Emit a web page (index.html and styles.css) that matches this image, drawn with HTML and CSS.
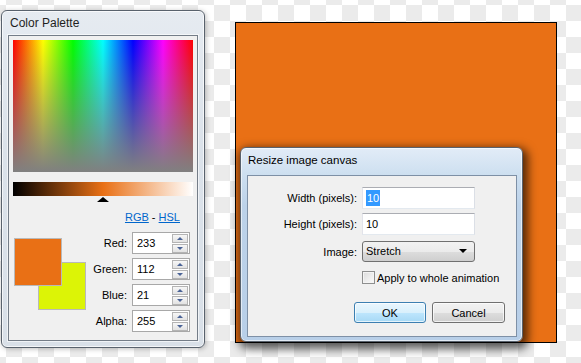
FILE: index.html
```html
<!DOCTYPE html>
<html lang="en">
<head>
    <meta charset="UTF-8">
    <title>Color Palette</title>
    <link rel="stylesheet" href="styles.css">
</head>
<body>
    <div class="win palette">
        <div class="win-title">Color Palette</div>
        <div class="win-body">
            <div class="hue"></div>
            <div class="shade"></div>
            <div class="marker"></div>
            <div class="modes"><a href="#">RGB</a> - <a href="#">HSL</a></div>
            <div class="mix">
                <div class="swatches">
                    <div class="swatch back"></div>
                    <div class="swatch front"></div>
                </div>
                <div class="channels">
                    <div class="channel">
                        <span class="channel-label">Red:</span>
                        <div class="spin"><div class="spin-value">233</div><div class="arrows"><b class="up"></b><b class="down"></b></div></div>
                    </div>
                    <div class="channel">
                        <span class="channel-label">Green:</span>
                        <div class="spin"><div class="spin-value">112</div><div class="arrows"><b class="up"></b><b class="down"></b></div></div>
                    </div>
                    <div class="channel">
                        <span class="channel-label">Blue:</span>
                        <div class="spin"><div class="spin-value">21</div><div class="arrows"><b class="up"></b><b class="down"></b></div></div>
                    </div>
                    <div class="channel">
                        <span class="channel-label">Alpha:</span>
                        <div class="spin"><div class="spin-value">255</div><div class="arrows"><b class="up"></b><b class="down"></b></div></div>
                    </div>
                </div>
            </div>
        </div>
    </div>

    <div class="canvas"></div>

    <div class="win dialog">
        <div class="win-title">Resize image canvas</div>
        <div class="win-body">
            <div class="row">
                <span class="row-label">Width (pixels):</span>
                <div class="textbox"><span class="selected">10</span></div>
            </div>
            <div class="row">
                <span class="row-label">Height (pixels):</span>
                <div class="textbox">10</div>
            </div>
            <div class="row row-select">
                <span class="row-label">Image:</span>
                <div class="select">Stretch<span class="caret"></span></div>
            </div>
            <div class="row row-check">
                <span class="row-label"></span>
                <span class="checkbox"></span>
                <span>Apply to whole animation</span>
            </div>
            <div class="buttons">
                <button class="btn default">OK</button>
                <button class="btn">Cancel</button>
            </div>
        </div>
    </div>
</body>
</html>
```

FILE: styles.css
```css
body {
    margin: 0;
    width: 581px;
    height: 363px;
    position: relative;
    overflow: hidden;
    font-family: "Liberation Sans", Arial, sans-serif;
    font-size: 11px;
    color: #000;
    background-color: #fff;
    background-image: conic-gradient(#ebebeb 0 25%, #fff 0 50%, #ebebeb 0 75%, #fff 0);
    background-size: 32px 32px;
    background-position: 6px 5px;
}
.win {
    position: absolute;
    box-sizing: border-box;
    border: 1px solid #59626d;
    border-radius: 6px;
    display: flex;
    flex-direction: column;
}
.win-title {
    white-space: nowrap;
}
.win-body {
    flex: 1;
    background-color: #f0f0f0;
}

/* color palette window */
.palette {
    left: 1px;
    top: 10px;
    width: 204px;
    height: 338px;
    background: linear-gradient(#e6ebf1, #dbe2ea 40%, #d9e0e8);
    box-shadow: inset 0 0 0 1px rgba(255, 255, 255, 0.7), 1px 1px 5px rgba(0, 0, 0, 0.25);
    padding: 0 6px 6px 6px;
}
.palette .win-title {
    height: 24px;
    line-height: 24px;
    padding-left: 2px;
    font-size: 12px;
    color: #1e1e1e;
}
.palette .win-body {
    border: 1px solid #747d88;
    box-shadow: 0 0 0 1px rgba(255, 255, 255, 0.6);
    padding: 4px 4px 0 4px;
}
.hue {
    height: 132px;
    background:
        linear-gradient(rgba(128, 128, 128, 0), #808080),
        linear-gradient(to right, #f00, #ff0, #0f0, #0ff, #00f, #f0f, #f00);
}
.shade {
    height: 14px;
    margin-top: 10px;
    background: linear-gradient(to right, #000, #e97015 50%, #fff);
}
.marker {
    width: 0;
    height: 0;
    margin: 1px 0 0 84px;
    border-left: 6px solid transparent;
    border-right: 6px solid transparent;
    border-bottom: 5px solid #000;
}
.modes {
    margin-top: 8px;
    padding-right: 13px;
    text-align: right;
    line-height: 14px;
}
.modes a {
    color: #0066cc;
}
.mix {
    display: flex;
    justify-content: space-between;
    margin-top: 8px;
}
.swatches {
    position: relative;
    width: 72px;
    height: 72px;
    margin: 6px 0 0 1px;
}
.swatch {
    position: absolute;
    box-sizing: border-box;
    width: 48px;
    height: 48px;
    border: 1px solid #b9b9b9;
}
.swatch.back {
    left: 24px;
    top: 24px;
    background-color: #dcf406;
}
.swatch.front {
    left: 0;
    top: 0;
    background-color: #e97015;
}
.channels {
    display: flex;
    flex-direction: column;
    gap: 4px;
    margin-right: 3px;
}
.channel {
    display: flex;
    align-items: center;
}
.channel-label {
    width: 40px;
    margin-right: 5px;
    text-align: right;
}
.spin {
    display: flex;
    box-sizing: border-box;
    width: 58px;
    height: 22px;
    border: 1px solid #a8a8a8;
    background-color: #fff;
}
.spin-value {
    flex: 1;
    line-height: 20px;
    padding-left: 4px;
}
.arrows {
    display: flex;
    flex-direction: column;
    justify-content: center;
    gap: 1px;
    padding-right: 1px;
}
.arrows b {
    box-sizing: border-box;
    width: 16px;
    height: 9px;
    border: 1px solid #b4b4b4;
    background: linear-gradient(#f7f7f7, #e2e2e2);
    display: flex;
    align-items: center;
    justify-content: center;
}
.arrows b::after {
    content: "";
    width: 0;
    height: 0;
    border-left: 3px solid transparent;
    border-right: 3px solid transparent;
}
.arrows .up::after {
    border-bottom: 3px solid #4a6396;
}
.arrows .down::after {
    border-top: 3px solid #4a6396;
}

/* image canvas */
.canvas {
    position: absolute;
    left: 235px;
    top: 22px;
    width: 320px;
    height: 319px;
    border: 1px solid #000;
    background-color: #e97015;
}

/* resize dialog */
.dialog {
    left: 240px;
    top: 147px;
    width: 283px;
    height: 195px;
    background: linear-gradient(#e2ecf7, #cddff0 14%, #bcd2e9 30%, #b8cfe8);
    box-shadow: inset 0 0 0 1px rgba(255, 255, 255, 0.6), 2px 4px 10px 3px rgba(0, 0, 0, 0.65);
    padding: 0 5px 4px 6px;
}
.dialog .win-title {
    height: 27px;
    line-height: 25px;
    padding-left: 1px;
    font-size: 11.5px;
}
.dialog .win-body {
    border: 1px solid #7e90a6;
    padding-top: 11px;
}
.row {
    display: flex;
    align-items: center;
    margin-bottom: 4px;
}
.row-label {
    width: 109px;
    margin-right: 5px;
    text-align: right;
    flex: none;
}
.textbox {
    box-sizing: border-box;
    width: 113px;
    height: 22px;
    line-height: 20px;
    padding-left: 3px;
    border: 1px solid #abadb3;
    border-color: #abadb3 #dbdfe6 #e3e9ef #e2e3ea;
    background-color: #fff;
}
.selected {
    background-color: #3399ff;
    color: #fff;
    padding: 2px 1px;
}
.row-select {
    margin-top: 6px;
}
.select {
    position: relative;
    box-sizing: border-box;
    width: 113px;
    height: 21px;
    line-height: 19px;
    padding-left: 3px;
    border: 1px solid #707070;
    border-radius: 3px;
    background: linear-gradient(#f2f2f2, #ebebeb 50%, #dddddd 51%, #cfcfcf);
}
.caret {
    position: absolute;
    right: 7px;
    top: 7px;
    width: 0;
    height: 0;
    border-left: 4px solid transparent;
    border-right: 4px solid transparent;
    border-top: 4px solid #000;
}
.row-check {
    margin-top: 9px;
}
.checkbox {
    box-sizing: border-box;
    width: 13px;
    height: 13px;
    margin-right: 2px;
    border: 1px solid #8e8f8f;
    background: linear-gradient(135deg, #dcdcdc, #fbfbfb);
    box-shadow: inset 0 0 0 1px #f4f4f4;
}
.buttons {
    display: flex;
    justify-content: flex-end;
    gap: 6px;
    margin-top: 18px;
    padding-right: 11px;
}
.btn {
    box-sizing: border-box;
    width: 73px;
    height: 21px;
    padding: 0;
    font-family: inherit;
    font-size: 11px;
    color: #000;
    border: 1px solid #707070;
    border-radius: 3px;
    background: linear-gradient(#f2f2f2, #ebebeb 50%, #dddddd 51%, #cfcfcf);
    box-shadow: inset 0 0 0 1px rgba(255, 255, 255, 0.7);
}
.btn.default {
    width: 72px;
    border-color: #3c7fb1;
    background: linear-gradient(#eaf6fd, #d9f0fc 50%, #bee6fd 51%, #a7d9f5);
}
```
